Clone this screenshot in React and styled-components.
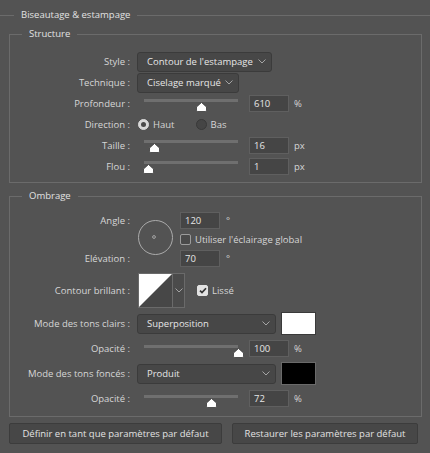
import React from 'react';
import styled, { createGlobalStyle } from 'styled-components';

const GlobalStyle = createGlobalStyle`
  html, body {
    margin: 0;
    padding: 0;
    background: #535353;
  }
  body {
    font-family: "Open Sans", "Noto Sans", sans-serif;
    font-size: 9.5px;
    color: #d6d6d6;
  }
`;

const Panel = styled.div`
  width: 430px;
  height: 453px;
  overflow: hidden;
  box-sizing: border-box;
  padding-top: 8px;
  background: #535353;
`;

const Section = styled.fieldset`
  margin: 0;
  padding: 0;
  min-width: 0;
  border: none;
  border-top: 1px solid #6b6b6b;
`;

const Legend = styled.legend`
  margin-left: ${(p) => p.$offset}px;
  padding: 0 7px;
  line-height: 14px;
  color: #e2e2e2;
  font-size: 9.5px;
`;

const SectionBody = styled.div`
  padding: 5px 8px 0 9px;
`;

const Group = styled.fieldset`
  margin: ${(p) => p.$mt || 0}px 0 0;
  padding: ${(p) => p.$pt}px 0 5px;
  min-width: 0;
  border: 1px solid #6b6b6b;
`;

const Row = styled.div`
  display: grid;
  grid-template-columns: 120px 1fr;
  column-gap: 7px;
  align-items: center;
  height: ${(p) => p.$h}px;
  margin-top: ${(p) => p.$mt || 0}px;
`;

const Label = styled.div`
  text-align: right;
  white-space: nowrap;
  color: #d6d6d6;
`;

const Controls = styled.div`
  display: flex;
  align-items: center;
  height: 100%;
`;

const Select = styled.div`
  width: ${(p) => p.$w}px;
  height: 20px;
  box-sizing: border-box;
  display: flex;
  align-items: center;
  justify-content: space-between;
  padding: 0 5px 0 9px;
  background: #474747;
  border: 1px solid #3b3b3b;
  border-radius: 3px;
  color: #e6e6e6;
  white-space: nowrap;
`;

const Field = styled.div`
  width: 40px;
  height: 17px;
  box-sizing: border-box;
  display: flex;
  align-items: center;
  padding-left: 4px;
  background: #454545;
  border: 1px solid #5f5f5f;
  color: #e6e6e6;
  flex-shrink: 0;
`;

const Unit = styled.span`
  margin-left: ${(p) => p.$gap || 5}px;
  color: #d6d6d6;
  align-self: ${(p) => (p.$raised ? 'flex-start' : 'auto')};
`;

const Slider = styled.div`
  position: relative;
  width: 94px;
  align-self: stretch;
  margin: 0 11px 0 7px;
  flex-shrink: 0;
`;

const Rail = styled.div`
  margin-top: ${(p) => p.$top}px;
  height: 3px;
  background: #6f6f6f;
`;

const Thumb = styled.svg`
  position: absolute;
  top: ${(p) => p.$top + 3}px;
  width: 11px;
  height: 10px;
  display: block;
`;

const RadioGroup = styled.div`
  display: flex;
  align-items: center;
  gap: 21px;
  margin-left: 1px;
`;

const RadioOption = styled.label`
  display: flex;
  align-items: center;
  gap: 4px;
  color: #d6d6d6;
`;

const RadioDot = styled.span`
  width: 11px;
  height: 11px;
  box-sizing: border-box;
  border-radius: 50%;
  display: flex;
  align-items: center;
  justify-content: center;
  background: ${(p) => (p.$on ? '#d9d9d9' : '#454545')};
  border: 1px solid ${(p) => (p.$on ? '#d9d9d9' : '#393939')};

  &::after {
    content: '';
    display: ${(p) => (p.$on ? 'block' : 'none')};
    width: 5px;
    height: 5px;
    border-radius: 50%;
    background: #4a4a4a;
  }
`;

const CheckOption = styled.label`
  display: flex;
  align-items: center;
  gap: 4px;
  color: #d6d6d6;
  white-space: nowrap;
`;

const CheckBox = styled.span`
  width: 11px;
  height: 11px;
  box-sizing: border-box;
  border-radius: 2px;
  display: flex;
  align-items: center;
  justify-content: center;
  background: ${(p) => (p.$on ? '#e2e2e2' : '#4a4a4a')};
  border: 1px solid ${(p) => (p.$on ? '#e2e2e2' : '#9c9c9c')};
`;

const AngleGrid = styled.div`
  display: grid;
  grid-template-columns: 120px 36px 1fr;
  grid-template-rows: repeat(3, 19px);
  column-gap: 7px;
  align-items: center;
`;

const Dial = styled.svg`
  grid-column: 2;
  grid-row: 1 / 4;
  align-self: start;
  margin: 9px 0 0 1px;
  width: 35px;
  height: 35px;
  display: block;
`;

const FieldLine = styled.div`
  grid-column: 3;
  display: flex;
  align-items: center;
`;

const ContourPicker = styled.div`
  display: flex;
  margin-left: 1px;
  height: 35px;
`;

const ContourThumb = styled.svg`
  width: 35px;
  height: 35px;
  display: block;
  box-sizing: border-box;
  border: 1px solid #6a6a6a;
`;

const ContourArrow = styled.div`
  width: 12px;
  box-sizing: border-box;
  display: flex;
  align-items: center;
  justify-content: center;
  background: #4b4b4b;
  border: 1px solid #6a6a6a;
  border-left: none;
`;

const Swatch = styled.div`
  width: 35px;
  height: 23px;
  box-sizing: border-box;
  margin-left: 5px;
  background: ${(p) => p.$color};
  border: 1px solid ${(p) => p.$edge};
`;

const ButtonBar = styled.div`
  display: flex;
  gap: 10px;
  margin-top: 6px;
`;

const Button = styled.button`
  width: ${(p) => p.$w}px;
  height: 21px;
  padding: 0;
  background: #474747;
  border: 1px solid #3c3c3c;
  border-radius: 2px;
  color: #e2e2e2;
  font-family: "Open Sans", "Noto Sans", sans-serif;
  font-size: 9.5px;
  white-space: nowrap;
`;

const Chevron = () => (
  <svg width="8" height="5" viewBox="0 0 8 5">
    <polyline points="0.5,0.5 4,4 7.5,0.5" fill="none" stroke="#a4a4a4" strokeWidth="1" />
  </svg>
);

const RangeSlider = ({ value, rail }) => (
  <Slider>
    <Rail $top={rail} />
    <Thumb $top={rail} viewBox="0 0 11 10" style={{ left: `calc(${value * 100}% - 5.5px)` }}>
      <path
        d="M5.5 0.5 L10.5 5 V8.3 Q10.5 9.5 9.3 9.5 H1.7 Q0.5 9.5 0.5 8.3 V5 Z"
        fill="#ffffff"
        stroke="#3a3a3a"
        strokeWidth="0.8"
      />
    </Thumb>
  </Slider>
);

const Check = ({ on, children }) => (
  <CheckOption>
    <CheckBox $on={on}>
      {on && (
        <svg width="8" height="7" viewBox="0 0 8 7">
          <polyline points="1,3.6 3,5.6 7,1.2" fill="none" stroke="#333" strokeWidth="1.7" />
        </svg>
      )}
    </CheckBox>
    {children}
  </CheckOption>
);

const SliderRow = ({ label, value, text, unit, rail, h }) => (
  <Row $h={h}>
    <Label>{label}</Label>
    <Controls>
      <RangeSlider value={value} rail={rail} />
      <Field>{text}</Field>
      <Unit>{unit}</Unit>
    </Controls>
  </Row>
);

export default function App() {
  return (
    <Panel>
      <GlobalStyle />
      <Section>
        <Legend $offset={14}>Biseautage &amp; estampage</Legend>
        <SectionBody>
          <Group $pt={10}>
            <Legend $offset={12}>Structure</Legend>

            <Row $h={21}>
              <Label>Style :</Label>
              <Controls>
                <Select $w={135}>
                  Contour de l'estampage
                  <Chevron />
                </Select>
              </Controls>
            </Row>

            <Row $h={21}>
              <Label>Technique :</Label>
              <Controls>
                <Select $w={102}>
                  Ciselage marqué
                  <Chevron />
                </Select>
              </Controls>
            </Row>

            <SliderRow label="Profondeur :" value={0.617} text="610" unit="%" rail={6} h={21} />

            <Row $h={21}>
              <Label>Direction :</Label>
              <Controls>
                <RadioGroup>
                  <RadioOption>
                    <RadioDot $on />
                    Haut
                  </RadioOption>
                  <RadioOption>
                    <RadioDot />
                    Bas
                  </RadioOption>
                </RadioGroup>
              </Controls>
            </Row>

            <SliderRow label="Taille :" value={0.117} text="16" unit="px" rail={5} h={21} />
            <SliderRow label="Flou :" value={0.053} text="1" unit="px" rail={5} h={21} />
          </Group>

          <Group $mt={6} $pt={8}>
            <Legend $offset={12}>Ombrage</Legend>

            <AngleGrid>
              <Label style={{ gridColumn: 1, gridRow: 1 }}>Angle :</Label>
              <Dial viewBox="0 0 35 35">
                <circle cx="17.5" cy="17.5" r="17" fill="none" stroke="#ababab" strokeWidth="1" />
                <circle cx="16" cy="17" r="1.4" fill="none" stroke="#ababab" strokeWidth="0.9" />
              </Dial>
              <FieldLine style={{ gridRow: 1 }}>
                <Field>120</Field>
                <Unit $gap={6}>°</Unit>
              </FieldLine>
              <FieldLine style={{ gridRow: 2 }}>
                <Check>Utiliser l'éclairage global</Check>
              </FieldLine>
              <Label style={{ gridColumn: 1, gridRow: 3 }}>Elévation :</Label>
              <FieldLine style={{ gridRow: 3 }}>
                <Field>70</Field>
                <Unit $gap={6}>°</Unit>
              </FieldLine>
            </AngleGrid>

            <Row $h={36} $mt={4}>
              <Label>Contour brillant :</Label>
              <Controls>
                <ContourPicker>
                  <ContourThumb viewBox="0 0 33 33" preserveAspectRatio="none">
                    <rect x="0" y="0" width="33" height="33" fill="#474747" />
                    <polygon points="0,0 33,0 0,33" fill="#ffffff" />
                  </ContourThumb>
                  <ContourArrow>
                    <Chevron />
                  </ContourArrow>
                </ContourPicker>
                <div style={{ width: 12 }} />
                <Check on>Lissé</Check>
              </Controls>
            </Row>

            <Row $h={25} $mt={3}>
              <Label>Mode des tons clairs :</Label>
              <Controls>
                <Select $w={139}>
                  Superposition
                  <Chevron />
                </Select>
                <Swatch $color="#ffffff" $edge="#3a3a3a" />
              </Controls>
            </Row>

            <SliderRow label="Opacité :" value={1} text="100" unit="%" rail={9} h={25} />

            <Row $h={25}>
              <Label>Mode des tons foncés :</Label>
              <Controls>
                <Select $w={139}>
                  Produit
                  <Chevron />
                </Select>
                <Swatch $color="#000000" $edge="#6a6a6a" />
              </Controls>
            </Row>

            <SliderRow label="Opacité :" value={0.72} text="72" unit="%" rail={9} h={25} />
          </Group>

          <ButtonBar>
            <Button $w={213}>Définir en tant que paramètres par défaut</Button>
            <Button $w={186}>Restaurer les paramètres par défaut</Button>
          </ButtonBar>
        </SectionBody>
      </Section>
    </Panel>
  );
}
